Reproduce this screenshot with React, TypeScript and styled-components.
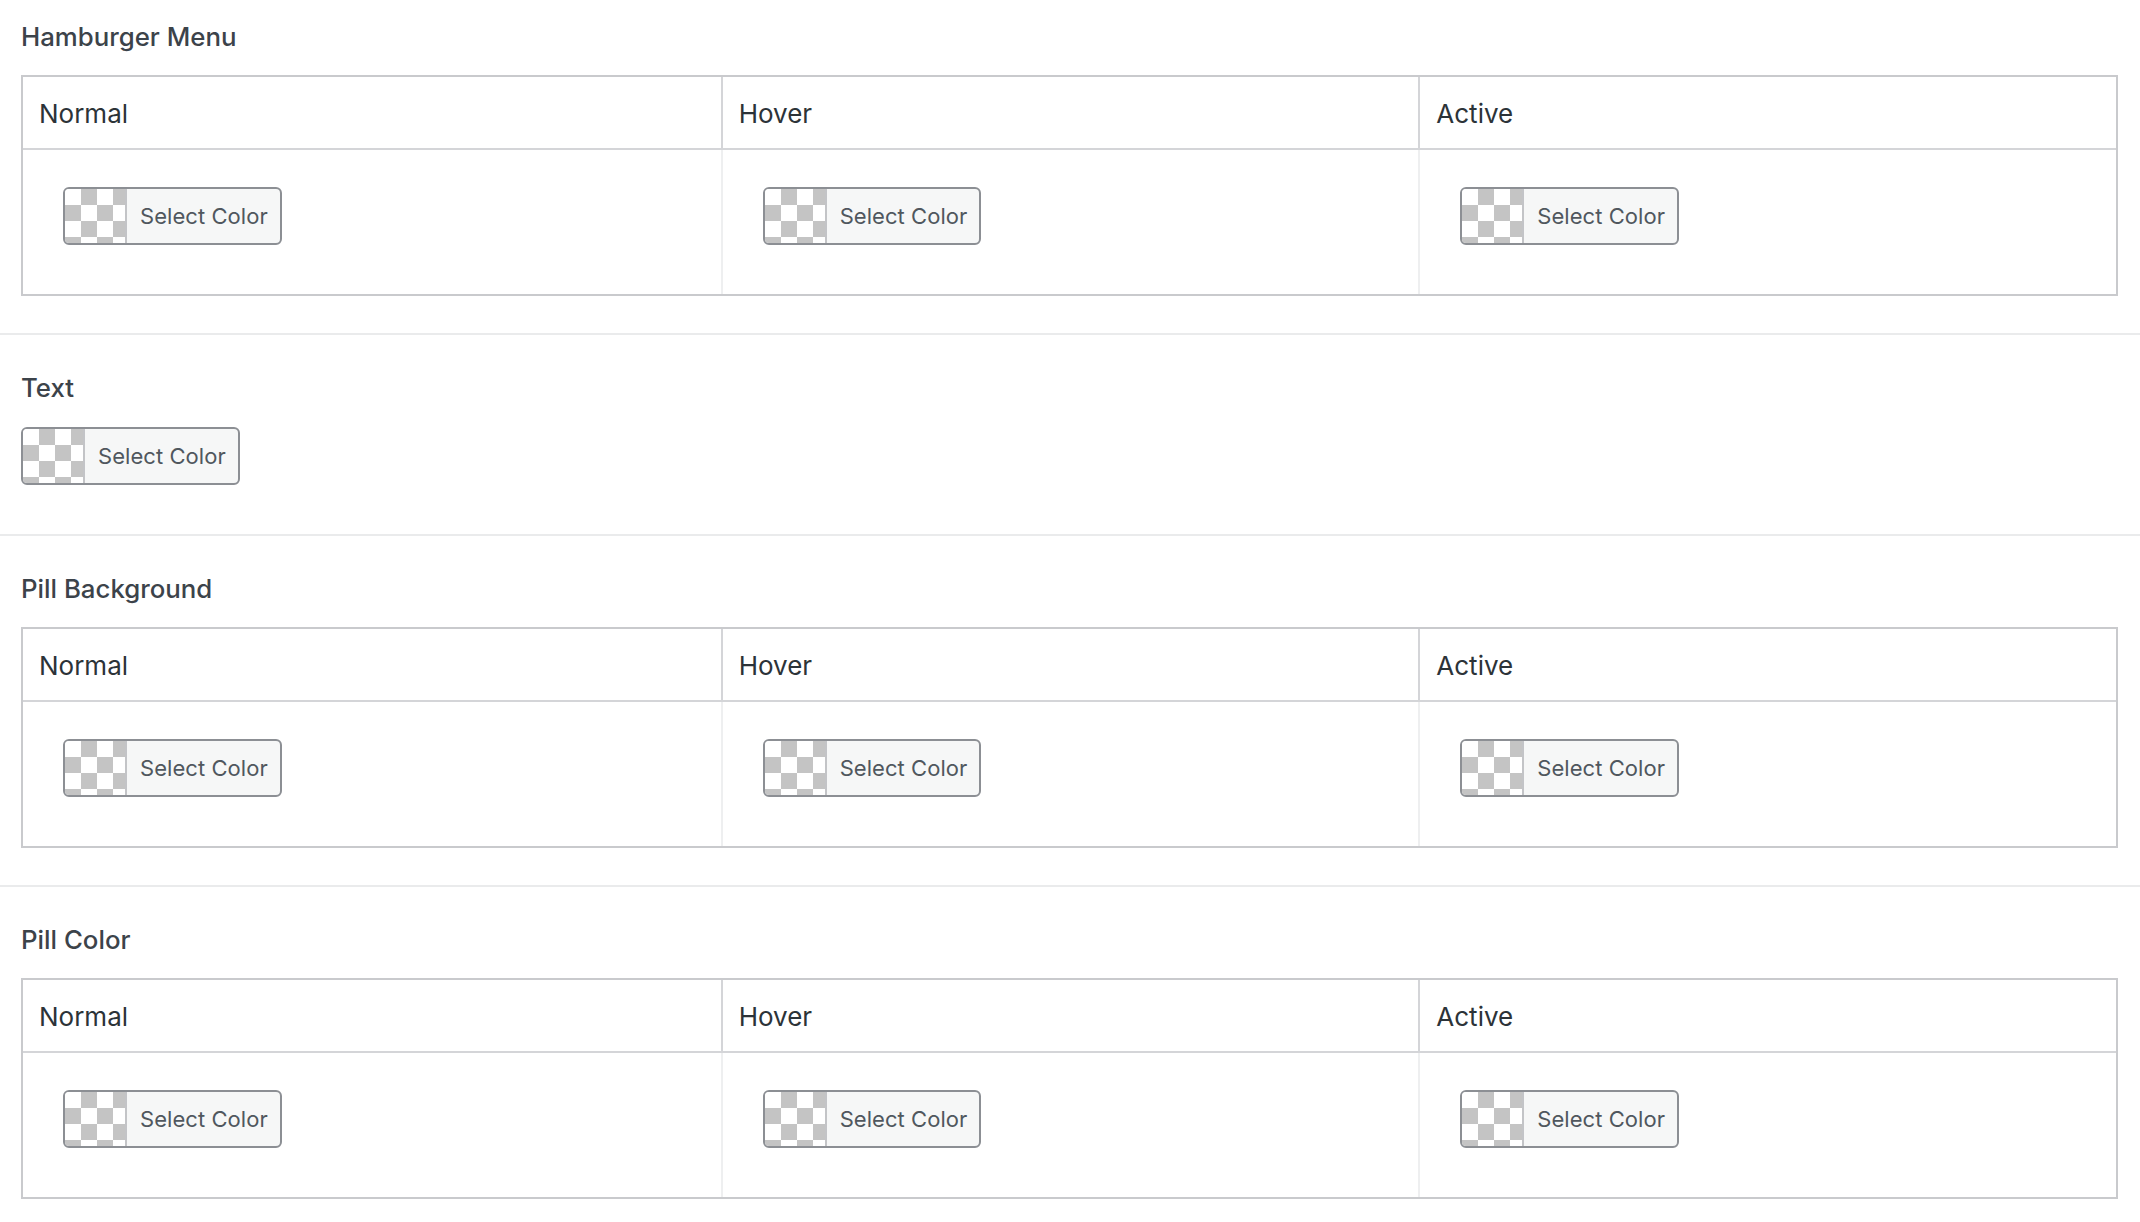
import React from "react";
import styled, { createGlobalStyle } from "styled-components";

const GlobalStyle = createGlobalStyle`
  html, body {
    margin: 0;
    padding: 0;
    background: #ffffff;
    overflow: hidden;
  }
  body {
    font-family: Inter, "Open Sans", "Liberation Sans", sans-serif;
    -webkit-font-smoothing: antialiased;
  }
  * { box-sizing: border-box; }
`;

const Page = styled.main`
  display: flex;
  flex-direction: column;
`;

const Section = styled.section<{ $first?: boolean; $last?: boolean }>`
  display: flex;
  flex-direction: column;
  gap: 24px;
  padding: ${(p) => (p.$first ? "23px" : "39px")} 22px 37px 21px;
  border-bottom: ${(p) => (p.$last ? "none" : "2px solid #eaebec")};
`;

const Heading = styled.h3`
  margin: 0;
  font-size: 25.8px;
  line-height: 28px;
  font-weight: 500;
  color: #3c434a;
`;

const Table = styled.div`
  display: grid;
  grid-template-columns: repeat(3, 1fr);
  border: 2px solid #c9cacd;
`;

const HeadCell = styled.div<{ $first?: boolean }>`
  display: flex;
  align-items: center;
  height: 73px;
  padding: 2px 16px 0;
  font-size: 26px;
  line-height: 31px;
  font-weight: 400;
  color: #2c3338;
  border-bottom: 2px solid #d4d5d8;
  border-left: ${(p) => (p.$first ? "none" : "2px solid #d4d5d8")};
`;

const BodyCell = styled.div<{ $first?: boolean }>`
  display: flex;
  align-items: flex-start;
  padding: 37px 16px 37px 40px;
  border-left: ${(p) => (p.$first ? "none" : "2px solid #eeeff0")};
`;

const ControlWrap = styled.div<{ $offset?: number }>`
  display: flex;
  margin-top: ${(p) => p.$offset ?? 0}px;
  padding-bottom: 12px;
`;

const ColorButton = styled.button`
  display: inline-flex;
  align-items: stretch;
  height: 58px;
  padding: 0;
  margin: 0;
  border: 2px solid #8c8f94;
  border-radius: 6px;
  overflow: hidden;
  background: #f6f7f7;
  cursor: pointer;
  font-family: inherit;
`;

const Swatch = styled.span`
  display: block;
  width: 62px;
  background: repeating-conic-gradient(#c4c4c4 0 25%, #ffffff 0 50%) 0 0 / 32px 32px;
  border-right: 2px solid #c3c4c7;
`;

const ButtonText = styled.span`
  display: flex;
  align-items: center;
  padding: 0 12px 0 13px;
  font-size: 22px;
  line-height: 26px;
  font-weight: 400;
  color: #50575e;
  letter-spacing: 0.05px;
`;

const ColorPicker: React.FC<{ offset?: number }> = ({ offset }) => (
  <ControlWrap $offset={offset}>
    <ColorButton type="button">
      <Swatch />
      <ButtonText>Select Color</ButtonText>
    </ColorButton>
  </ControlWrap>
);

const states = ["Normal", "Hover", "Active"];

const StateTable: React.FC = () => (
  <Table>
    {states.map((s, i) => (
      <HeadCell key={s} $first={i === 0}>
        {s}
      </HeadCell>
    ))}
    {states.map((s, i) => (
      <BodyCell key={s} $first={i === 0}>
        <ColorPicker />
      </BodyCell>
    ))}
  </Table>
);

export default function App() {
  return (
    <>
      <GlobalStyle />
      <Page>
        <Section $first>
          <Heading>Hamburger Menu</Heading>
          <StateTable />
        </Section>
        <Section>
          <Heading>Text</Heading>
          <ColorPicker offset={1} />
        </Section>
        <Section>
          <Heading>Pill Background</Heading>
          <StateTable />
        </Section>
        <Section $last>
          <Heading>Pill Color</Heading>
          <StateTable />
        </Section>
      </Page>
    </>
  );
}
